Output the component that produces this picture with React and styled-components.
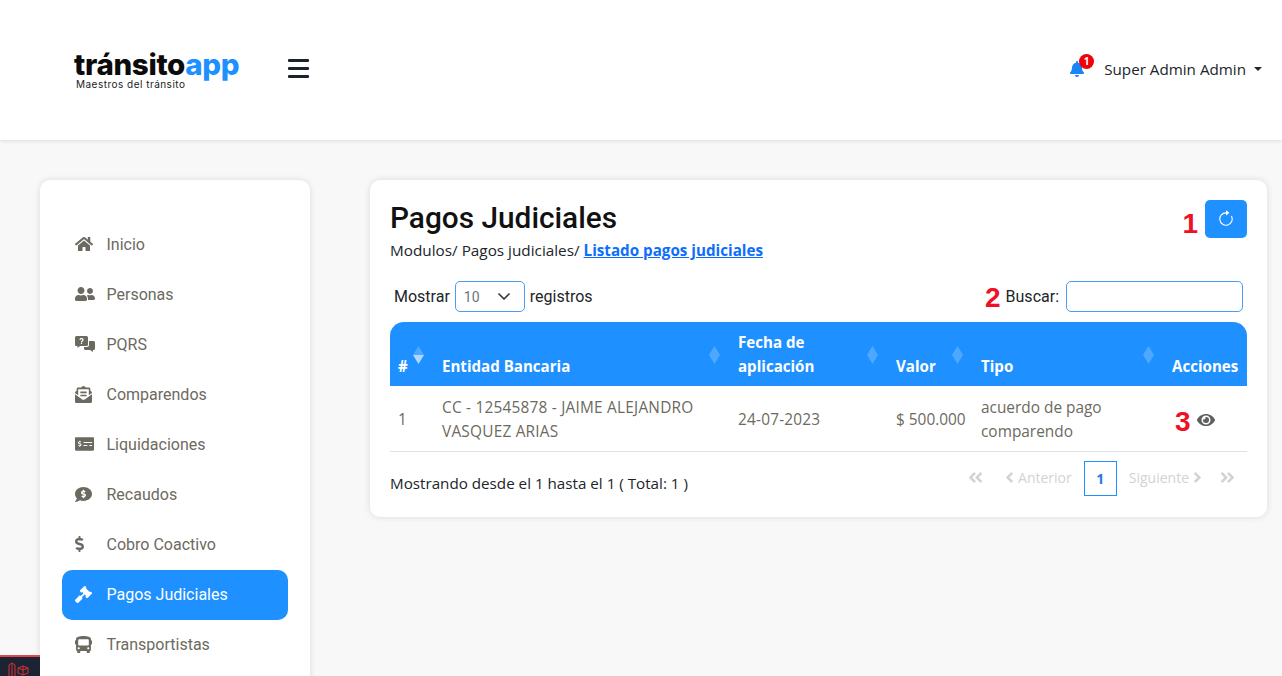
import React from 'react';
import styled, { createGlobalStyle } from 'styled-components';
import { FaHome, FaUserFriends, FaEnvelopeOpenText, FaMoneyCheckAlt, FaCommentDollar, FaDollarSign, FaGavel, FaBus, FaBell, FaEye, FaAngleDoubleLeft, FaAngleDoubleRight, FaAngleLeft, FaAngleRight } from 'react-icons/fa';
import { BsArrowClockwise } from 'react-icons/bs';

const Global = createGlobalStyle`
  html, body { margin: 0; padding: 0; height: 676px; overflow: hidden; background: #f8f8f8; }
  * { box-sizing: border-box; }
  #root { height: 676px; overflow: hidden; }
`;
const Page = styled.div`position: relative; height: 676px; overflow: hidden; font-family: "Open Sans", sans-serif; color: #212529;`;
const Header = styled.header`height: 140px; background: #fff; box-shadow: 0 1px 4px rgba(0,0,0,.12); display: flex; align-items: center; padding: 0 20px 0 74px;`;
const Logo = styled.div`width: 166px; display: flex; flex-direction: column; margin-top: -2px;`;
const LogoWord = styled.div`font: 800 29.500px/30px Inter, sans-serif; letter-spacing: -.33px; color: #0b0b0b; white-space: nowrap; span { color: #1e90ff; }`;
const LogoTag = styled.div`font: 400 10px/11px Inter, sans-serif; color: #222; margin: 0 0 0 2px; letter-spacing: .48px; white-space: nowrap;`;
const Burger = styled.div`width: 21px; margin-left: 48px; margin-top: -3px; display: flex; flex-direction: column; gap: 5px; i { display: block; height: 3px; background: #1c222b; border-radius: 1px; }`;
const UserArea = styled.div`margin-left: auto; display: flex; align-items: center; font-size: 15.200px; color: #212529; margin-top: -2px;`;
const BellWrap = styled.div`position: relative; color: #1a86f5; font-size: 16px; display: flex; margin-right: 19px;`;
const Badge = styled.span`position: absolute; top: -7px; left: 10px; width: 15px; height: 15px; border-radius: 50%; background: #f00008; color: #fff; font: 700 10px/15px "Open Sans", sans-serif; text-align: center;`;
const Caret = styled.span`margin-left: 8px; width: 0; height: 0; border-top: 4px solid #212529; border-left: 4px solid transparent; border-right: 4px solid transparent;`;
const Body = styled.div`display: flex; align-items: flex-start; padding: 40px 15px 0 40px; gap: 60px;`;
const Sidebar = styled.nav`width: 270px; height: 600px; flex: none; background: #fff; border-radius: 10px; box-shadow: 0 0 6px rgba(0,0,0,.12); padding: 40px 22px 0;`;
const NavItem = styled.a`display: flex; align-items: center; height: 50px; border-radius: 10px; padding: 0 0 2px 13px; font: 400 16px Roboto, sans-serif; color: ${p => p.$active ? '#fff' : '#6c6a60'}; background: ${p => p.$active ? '#1e90ff' : 'transparent'};`;
const NavIcon = styled.span`width: 31.500px; flex: none; display: flex; svg { display: block; flex: none; width: ${p => p.$w}px; height: ${p => p.$h}px; }`;
const Card = styled.main`flex: 1; height: 337px; background: #fff; border-radius: 10px; box-shadow: 0 0 7px rgba(0,0,0,.12); padding: 20px 20px 0;`;
const TitleRow = styled.div`display: flex; justify-content: space-between; align-items: flex-start; height: 61px;`;
const Title = styled.h1`font: 500 29.800px/36px Roboto, sans-serif; color: #111; margin: 0 0 3px;`;
const Crumb = styled.div`font: 400 15.300px/22px "Open Sans", sans-serif; color: #212529; a { color: #0d6efd; font-weight: 700; font-size: 15.200px; text-decoration: underline; }`;
const Actions = styled.div`display: flex; align-items: center;`;
const Mark = styled.span`color: #ee1126; font: 700 28px/26px "Liberation Sans", sans-serif; margin-top: ${p => p.$dy || 0}px;`;
const RefreshButton = styled.button`width: 42px; height: 38px; margin-left: 7px; background: #1e90ff; border: 0; border-radius: 5px; color: #fff; font-size: 18px; display: flex; align-items: center; justify-content: center; padding: 0;`;
const Controls = styled.div`display: flex; justify-content: space-between; align-items: center; height: 31px; margin-top: 20px; padding: 0 4px; font: 400 16px Roboto, sans-serif;`;
const Group = styled.div`display: flex; align-items: center; gap: 5px;`;
const SelectBox = styled.div`width: 70px; height: 31px; border: 1px solid #4a9df0; border-radius: 5px; display: flex; align-items: center; justify-content: space-between; padding: 0 14px 0 8px; font-size: 14px; color: #6c757d; svg { display: block; }`;
const SearchBox = styled.input`width: 177px; height: 31px; border: 1px solid #4a9df0; border-radius: 5px; margin-left: 2px; outline: none;`;
const Table = styled.table`width: 100%; border-collapse: collapse; table-layout: fixed; margin-top: 10px;`;
const HeadRow = styled.tr`background: #1e90ff; height: 64px;`;
const Th = styled.th`position: relative; width: ${p => p.$w}px; padding: 8px; text-align: left; vertical-align: bottom; font: 700 15.100px/24px "Open Sans", sans-serif; color: #fff; &:first-child { border-radius: 14px 0 0 0; } &:last-child { border-radius: 0 14px 0 0; }`;
const Sort = styled.svg`position: absolute; right: 10px; top: 24px;`;
const Td = styled.td`padding: 10px 8px 7px; font: 400 15.400px/24px "Open Sans", sans-serif; letter-spacing: ${p => p.$track || 0}px; color: #6c6a60; border-bottom: 1px solid #dee2e6; vertical-align: middle; white-space: ${p => p.$nowrap ? 'nowrap' : 'normal'};`;
const ActionCell = styled.div`display: flex; align-items: center; padding-left: 3px; color: #5f5f5f; font-size: 18px; gap: 6px;`;
const Footer = styled.div`display: flex; justify-content: space-between; align-items: center; margin-top: 9px;`;
const Info = styled.div`font: 400 15.200px/24px "Open Sans", sans-serif; color: #212529; margin-top: 8px;`;
const Pager = styled.div`display: flex; align-items: center; color: #d3d3d3; font: 400 14px "Open Sans", sans-serif; padding-right: 11px;`;
const PageLink = styled.span`display: flex; align-items: center; gap: ${p => p.$gap || 0}px; margin-left: ${p => p.$ml || 0}px; padding-bottom: 2px; svg { display: block; flex: none; width: 17px; height: 17px; }`;
const Current = styled.span`width: 33px; height: 35px; border: 1px solid #1e90ff; color: #1e78e8; font-weight: 700; display: flex; align-items: center; justify-content: center; margin: 0 12px;`;
const Widget = styled.div`position: absolute; left: 0; bottom: 0; width: 40px; height: 21px; background: #1c2333; border-top: 2px solid #e8414f; padding: 5px 0 0 8px; svg { display: block; }`;

const PqrsIcon = () => (
  <svg viewBox="0 0 20 16" fill="currentColor">
    <path d="M1.500 0h10A1.500 1.500 0 0 1 13 1.500v7A1.500 1.500 0 0 1 11.500 10H5l-2.500 2v-2h-1A1.500 1.500 0 0 1 0 8.500v-7A1.500 1.500 0 0 1 1.500 0z" />
    <path d="M14 5h4.500A1.500 1.500 0 0 1 20 6.500v6a1.500 1.500 0 0 1-1.500 1.500H18v2l-3-2h-4.500A1.500 1.500 0 0 1 9 12.500V11h3a2 2 0 0 0 2-2z" />
    <path d="M6.500 2C5.300 2 4.500 2.700 4.400 3.700l1.200.2c.1-.5.400-.8.900-.8s.8.300.8.700c0 .8-1.400 1-1.400 2.400h1.200c0-.9 1.500-1.200 1.500-2.500C8.600 2.700 7.700 2 6.500 2zM5.900 6.800h1.200V8H5.900z" fill="#fff" />
  </svg>
);

const nav = [
  { label: 'Inicio', icon: <FaHome />, w: 18, h: 16 },
  { label: 'Personas', icon: <FaUserFriends />, w: 20, h: 16 },
  { label: 'PQRS', icon: <PqrsIcon />, w: 20, h: 16 },
  { label: 'Comparendos', icon: <FaEnvelopeOpenText />, w: 17, h: 17 },
  { label: 'Liquidaciones', icon: <FaMoneyCheckAlt />, w: 19, h: 16 },
  { label: 'Recaudos', icon: <FaCommentDollar />, w: 17, h: 17 },
  { label: 'Cobro Coactivo', icon: <FaDollarSign />, w: 9, h: 16 },
  { label: 'Pagos Judiciales', icon: <FaGavel />, w: 17, h: 17, active: true },
  { label: 'Transportistas', icon: <FaBus />, w: 17, h: 17 },
];

const SortMark = ({ active }) => (
  <Sort width="11" height="18" viewBox="0 0 11 18" fill="#fff">
    <path d="M5.500 0L11 9H0z" opacity=".22" />
    <path d="M0 9h11L5.500 18z" opacity={active ? '.65' : '.22'} />
  </Sort>
);

export default function App() {
  return (
    <Page>
      <Global />
      <Header>
        <Logo>
          <LogoWord>tránsito<span>app</span></LogoWord>
          <LogoTag>Maestros del tránsito</LogoTag>
        </Logo>
        <Burger><i /><i /><i /></Burger>
        <UserArea>
          <BellWrap><FaBell /><Badge>1</Badge></BellWrap>
          Super Admin Admin<Caret />
        </UserArea>
      </Header>
      <Body>
        <Sidebar>
          {nav.map(({ label, icon, w, h, active }) => (
            <NavItem key={label} $active={active}><NavIcon $w={w} $h={h}>{icon}</NavIcon>{label}</NavItem>
          ))}
        </Sidebar>
        <Card>
          <TitleRow>
            <div>
              <Title>Pagos Judiciales</Title>
              <Crumb>Modulos/ Pagos judiciales/ <a>Listado pagos judiciales</a></Crumb>
            </div>
            <Actions><Mark $dy={10}>1</Mark><RefreshButton><BsArrowClockwise /></RefreshButton></Actions>
          </TitleRow>
          <Controls>
            <Group>
              Mostrar
              <SelectBox>10
                <svg width="12" height="7" viewBox="0 0 12 7" fill="none" stroke="#343a40" strokeWidth="1.700" strokeLinecap="round" strokeLinejoin="round"><path d="M1 1l5 5 5-5" /></svg>
              </SelectBox>
              registros
            </Group>
            <Group><Mark $dy={2}>2</Mark>Buscar:<SearchBox /></Group>
          </Controls>
          <Table>
            <thead>
              <HeadRow>
                <Th $w={44}># <SortMark active /></Th>
                <Th $w={296}>Entidad Bancaria<SortMark /></Th>
                <Th $w={158}>Fecha de aplicación<SortMark /></Th>
                <Th $w={85}>Valor<SortMark /></Th>
                <Th $w={191}>Tipo<SortMark /></Th>
                <Th>Acciones</Th>
              </HeadRow>
            </thead>
            <tbody>
              <tr>
                <Td>1</Td>
                <Td $track={0.22}>CC - 12545878 - JAIME ALEJANDRO VASQUEZ ARIAS</Td>
                <Td $track={0.2}>24-07-2023</Td>
                <Td $nowrap>$ 500.000</Td>
                <Td>acuerdo de pago comparendo</Td>
                <Td><ActionCell><Mark $dy={3}>3</Mark><FaEye /></ActionCell></Td>
              </tr>
            </tbody>
          </Table>
          <Footer>
            <Info>Mostrando desde el 1 hasta el 1 ( Total: 1 )</Info>
            <Pager>
              <PageLink><FaAngleDoubleLeft /></PageLink>
              <PageLink $ml={17} $gap={-6}><FaAngleLeft />Anterior</PageLink>
              <Current>1</Current>
              <PageLink>Siguiente<FaAngleRight /></PageLink>
              <PageLink $ml={13}><FaAngleDoubleRight /></PageLink>
            </Pager>
          </Footer>
        </Card>
      </Body>
      <Widget>
        <svg width="24" height="14" viewBox="0 0 24 14" fill="none" stroke="#d8322f" strokeWidth="1"><path d="M1 3l3-2 3 2v11M1 3v11M4 1v13M10 6l5-2 5 2v5l-5 2-5-2zM15 4v9M10 6l5 2 5-2" /></svg>
      </Widget>
    </Page>
  );
}
